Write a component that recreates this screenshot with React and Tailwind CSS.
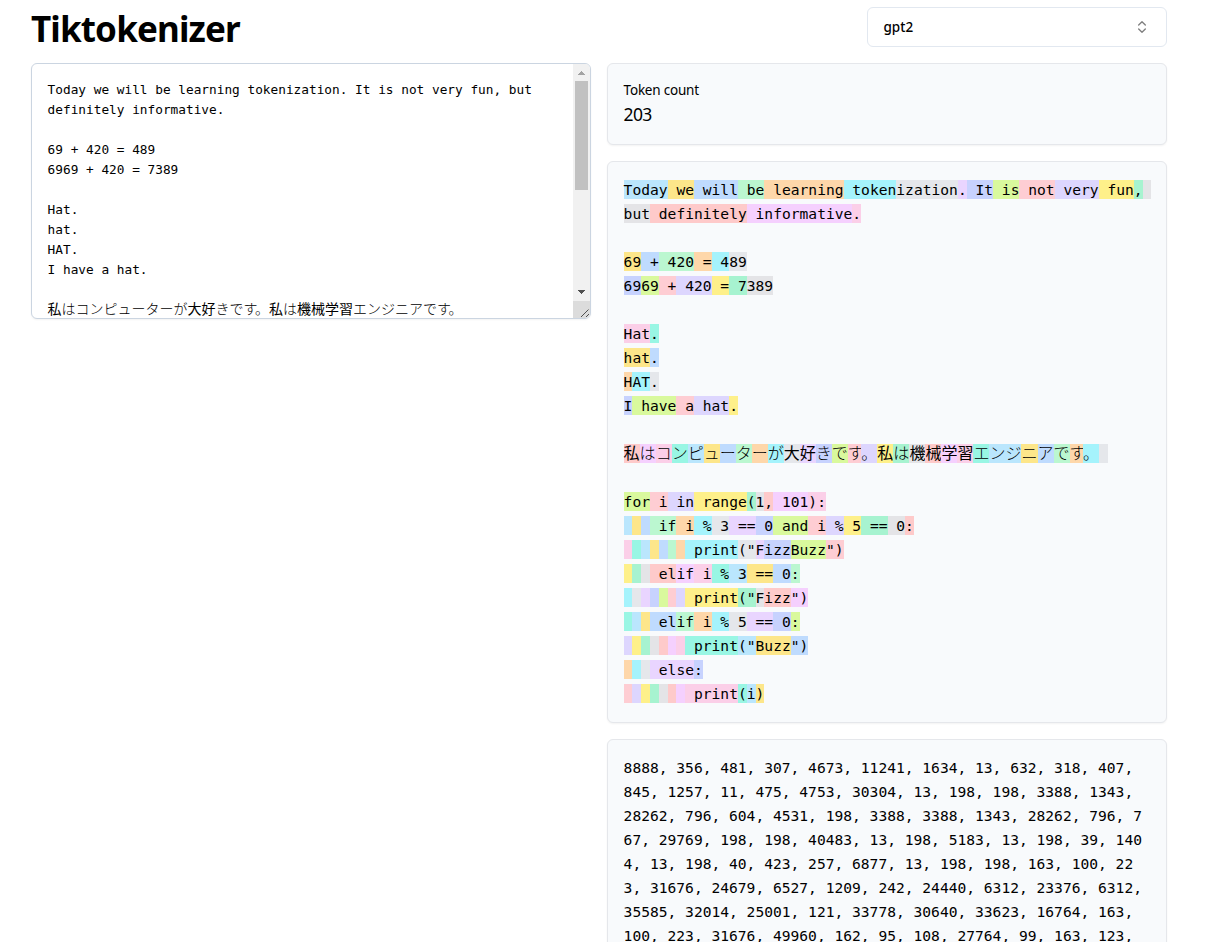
import { Fragment } from "react";

const TOKEN_COLORS = [
  "bg-[#bae6fd]",
  "bg-[#fde68a]",
  "bg-[#bfdbfe]",
  "bg-[#bbf7d0]",
  "bg-[#fed7aa]",
  "bg-[#a5f3fc]",
  "bg-[#e5e7eb]",
  "bg-[#e9d5ff]",
  "bg-[#c7d2fe]",
  "bg-[#d9f99d]",
  "bg-[#fecdd3]",
  "bg-[#ddd6fe]",
  "bg-[#fef08a]",
  "bg-[#a7f3d0]",
  "bg-[#e4e4e7]",
  "bg-[#fecaca]",
  "bg-[#f5d0fe]",
  "bg-[#fbcfe8]",
  "bg-[#99f6e4]",
];

// Each line: index of its first colour, then its tokens in order.
const LINES = [
  [0, ["Today", " we", " will", " be", " learning", " token", "ization", ".", " It", " is", " not", " very", " fun", ",", " "]],
  [14, ["but", " definitely", " informative", "."]],
  [0, []],
  [1, ["69", " +", " 420", " =", " 4", "89"]],
  [8, ["69", "69", " +", " 420", " =", " 7", "389"]],
  [0, []],
  [17, ["Hat", "."]],
  [1, ["hat", "."]],
  [4, ["H", "AT", "."]],
  [8, ["I", " have", " a", " hat", "."]],
  [0, []],
  [15, ["私", "は", "コ", "ン", "ピ", "ュ", "ー", "タ", "ー", "が", "大", "好", "き", "で", "す", "。", "私", "は", "機", "械", "学", "習", "エ", "ンジ", "ニ", "ア", "で", "す", "。", " "]],
  [0, []],
  [9, ["for", " i", " in", " range", "(", "1", ",", " 101", "):"]],
  [0, [" ", " ", " ", " if", " i", " %", " 3", " ==", " 0", " and", " i", " %", " 5", " ==", " 0", ":"]],
  [17, [" ", " ", " ", " ", " ", " ", " ", " print", "(\"", "F", "izz", "Buzz", "\")"]],
  [12, [" ", " ", " ", " el", "if", " i", " %", " 3", " ==", " 0", ":"]],
  [5, [" ", " ", " ", " ", " ", " ", " ", " print", "(\"", "F", "izz", "\")"]],
  [18, [" ", " ", " ", " el", "if", " i", " %", " 5", " ==", " 0", ":"]],
  [11, [" ", " ", " ", " ", " ", " ", " ", " print", "(\"", "Buzz", "\")"]],
  [4, [" ", " ", " ", " else", ":"]],
  [10, [" ", " ", " ", " ", " ", " ", " ", " print", "(", "i", ")"]],
];

const INPUT_LINES = [
  "Today we will be learning tokenization. It is not very fun, but",
  "definitely informative.",
  "",
  "69 + 420 = 489",
  "6969 + 420 = 7389",
  "",
  "Hat.",
  "hat.",
  "HAT.",
  "I have a hat.",
  "",
  "私はコンピューターが大好きです。私は機械学習エンジニアです。",
];

const ID_LINES = [
  "8888, 356, 481, 307, 4673, 11241, 1634, 13, 632, 318, 407,",
  "845, 1257, 11, 475, 4753, 30304, 13, 198, 198, 3388, 1343,",
  "28262, 796, 604, 4531, 198, 3388, 3388, 1343, 28262, 796, 7",
  "67, 29769, 198, 198, 40483, 13, 198, 5183, 13, 198, 39, 140",
  "4, 13, 198, 40, 423, 257, 6877, 13, 198, 198, 163, 100, 22",
  "3, 31676, 24679, 6527, 1209, 242, 24440, 6312, 23376, 6312,",
  "35585, 32014, 25001, 121, 33778, 30640, 33623, 16764, 163,",
  "100, 223, 31676, 49960, 162, 95, 108, 27764, 99, 163, 123,",
];

const MONO = "font-['DejaVu_Sans_Mono','Noto_Sans_CJK_JP',monospace]";
const SANS = "font-['Noto_Sans','Open_Sans',sans-serif]";
const CARD = "rounded-md border border-[#e5e7eb] bg-[#f8fafc] py-4 pr-4 pl-[15.6px] shadow-xs";

const isKana = (ch) => /[\u3002\u3040-\u30ff]/.test(ch);
const isWide = (ch) => /[\u3000-\u9fff]/.test(ch);

function Glyphs({ text, size }) {
  const large = size === "lg";
  return [...text].map((ch, i) => {
    if (!isWide(ch)) return <Fragment key={i}>{ch}</Fragment>;
    const weight = isKana(ch) ? "font-light" : "font-normal";
    const fit =
      ch === "す"
        ? large
          ? "tracking-[-2.5px]"
          : "tracking-[-2.5px]"
        : "tracking-normal";
    return (
      <span key={i} className={`${large ? "text-[16px]" : "text-[14px]"} leading-none ${weight} ${fit}`}>
        {ch}
      </span>
    );
  });
}

function Select() {
  return (
    <button className="flex h-10 w-[300px] items-center justify-between rounded-md border border-[#e2e8f0] bg-white pl-[15.5px] pr-4 text-left">
      <span className="text-[13.5px] leading-5 font-medium">gpt2</span>
      <svg width="16" height="16" viewBox="0 0 24 24" fill="none" stroke="#000" strokeOpacity="0.5" strokeWidth="2" strokeLinecap="round" strokeLinejoin="round">
        <path d="m7 15 5 5 5-5" />
        <path d="m7 9 5-5 5 5" />
      </svg>
    </button>
  );
}

function Editor() {
  return (
    <div className="flex h-64 overflow-hidden rounded-md border border-[#cbd5e1] bg-white shadow-xs">
      <div className={`flex-1 overflow-hidden pt-4 pl-[15.6px] text-[12.785px] leading-5 whitespace-pre ${MONO}`}>
        {INPUT_LINES.map((line, i) => (
          <div key={i} className="h-5">
            <Glyphs text={line} size="sm" />
          </div>
        ))}
      </div>
      <div className="flex w-[17px] flex-col bg-[#f1f1f1]">
        <svg width="17" height="17" viewBox="0 0 17 17" shapeRendering="crispEdges">
          <path d="M5 11h7v-1h-1v-1h-1v-1h-1v-1h-1v1h-1v1h-1v1h-1z" fill="#a3a3a3" />
        </svg>
        <div className="mx-[2px] h-[109px] bg-[#c1c1c1]" />
        <div className="flex-1" />
        <svg width="17" height="17" viewBox="0 0 17 17" shapeRendering="crispEdges">
          <path d="M5 6h7v1h-1v1h-1v1h-1v1h-1v-1h-1v-1h-1v-1h-1z" fill="#505050" />
        </svg>
        <svg width="17" height="17" viewBox="0 0 17 17" className="bg-[#dcdcdc]">
          <path d="M8 16 15.5 8.500M13 16l3-3" stroke="#505050" strokeWidth="1" />
        </svg>
      </div>
    </div>
  );
}

export default function App() {
  return (
    <main className={`h-[942px] overflow-hidden bg-white pt-[7px] pl-[31px] text-black ${SANS}`}>
      <div className="flex w-[1136px] flex-col gap-4">
        <header className="flex h-10 justify-between">
          <h1 className="text-[35px] leading-[44px] font-bold tracking-[-0.86px]">Tiktokenizer</h1>
          <Select />
        </header>
        <div className="grid grid-cols-2 items-start gap-4">
          <Editor />
          <div className="flex flex-col gap-4">
            <section className={`h-[82px] ${CARD}`}>
              <p className="text-[13.5px] leading-5 tracking-[-0.22px]">Token count</p>
              <p className="text-[17.5px] leading-7 tracking-[-0.7px]">203</p>
            </section>
            <section className={`${CARD} h-[562px] text-[14.6px] leading-6 whitespace-pre ${MONO}`}>
              {LINES.map(([start, tokens], i) => (
                <div key={i} className="h-6">
                  {tokens.map((token, j) => (
                    <span key={j} className={`py-px ${TOKEN_COLORS[(start + j) % TOKEN_COLORS.length]}`}>
                      <Glyphs text={token} size="lg" />
                    </span>
                  ))}
                </div>
              ))}
            </section>
            <section className={`${CARD} text-[14.6px] leading-6 whitespace-pre ${MONO}`}>
              {ID_LINES.map((line, i) => (
                <div key={i} className="h-6">
                  {line}
                </div>
              ))}
            </section>
          </div>
        </div>
      </div>
    </main>
  );
}
